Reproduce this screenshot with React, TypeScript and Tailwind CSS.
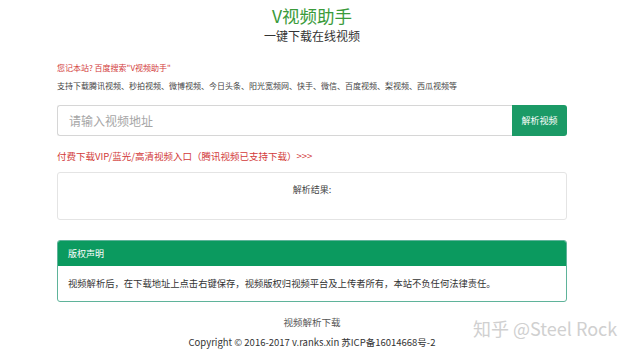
import React from "react";

const F = { fontFamily: '"Noto Sans CJK SC", "Noto Sans", "Liberation Sans", sans-serif' };

export default function App() {
  return (
    <div className="relative w-[640px] h-[355px] bg-white overflow-hidden" style={F}>
      <div className="flex flex-col items-center pl-[57px] pr-[73px]">
        <div className="w-full flex flex-col items-center pt-[5px]">
          <div className="text-[17.5px] leading-[22px] text-[#3b9b3b]">V视频助手</div>
          <div className="text-[12px] leading-[18px] text-[#333]">一键下载在线视频</div>
        </div>
        <div className="w-full mt-[17px] text-[8px] leading-[12px] text-[#d23a3a]">您记本站? 百度搜索"V视频助手"</div>
        <div className="w-full mt-[6px] text-[8px] leading-[12px] text-[#444]">
          支持下载腾讯视频、秒拍视频、微博视频、今日头条、阳光宽频网、快手、微信、百度视频、梨视频、西瓜视频等
        </div>
        <div className="w-full mt-[13px] flex h-[31px]">
          <div className="flex-1 border border-[#d6d6d6] border-r-0 rounded-l-[3px] flex items-center pl-[11px] text-[12px] text-[#a6a6a6]">
            请输入视频地址
          </div>
          <div className="w-[55px] bg-[#1b9a66] rounded-r-[3px] flex items-center justify-center text-[9px] text-white">
            解析视频
          </div>
        </div>
        <div className="w-full mt-[14px] text-[9.5px] leading-[12px] text-[#d23a3a]">
          付费下载VIP/蓝光/高清视频入口（腾讯视频已支持下载）&gt;&gt;&gt;
        </div>
        <div className="w-full mt-[10px] h-[48px] border border-[#e4e4e4] rounded-[3px] flex justify-center pt-[11px]">
          <div className="text-[9px] leading-[12px] text-[#444]">解析结果:</div>
        </div>
        <div className="w-full mt-[20px] border border-[#5fb39a] rounded-[3px] overflow-hidden">
          <div className="h-[25px] bg-[#0b9a5f] flex items-center pl-[10px] text-[9px] text-white">版权声明</div>
          <div className="h-[35px] flex items-center pl-[10px] text-[9.3px] text-[#333]">
            视频解析后，在下载地址上点击右键保存，视频版权归视频平台及上传者所有，本站不负任何法律责任。
          </div>
        </div>
        <div className="w-full mt-[14px] text-center text-[9.5px] leading-[12px] text-[#555]">视频解析下载</div>
        <div className="w-full mt-[8px] text-center text-[9.5px] leading-[12px] text-[#333]">
          Copyright © 2016-2017 v.ranks.xin 苏ICP备16014668号-2
        </div>
      </div>
      <div className="absolute left-[473px] top-[317px] text-[18px] leading-[22px] text-[#d0d0d0] whitespace-nowrap">
        知乎 @Steel Rock
      </div>
    </div>
  );
}
